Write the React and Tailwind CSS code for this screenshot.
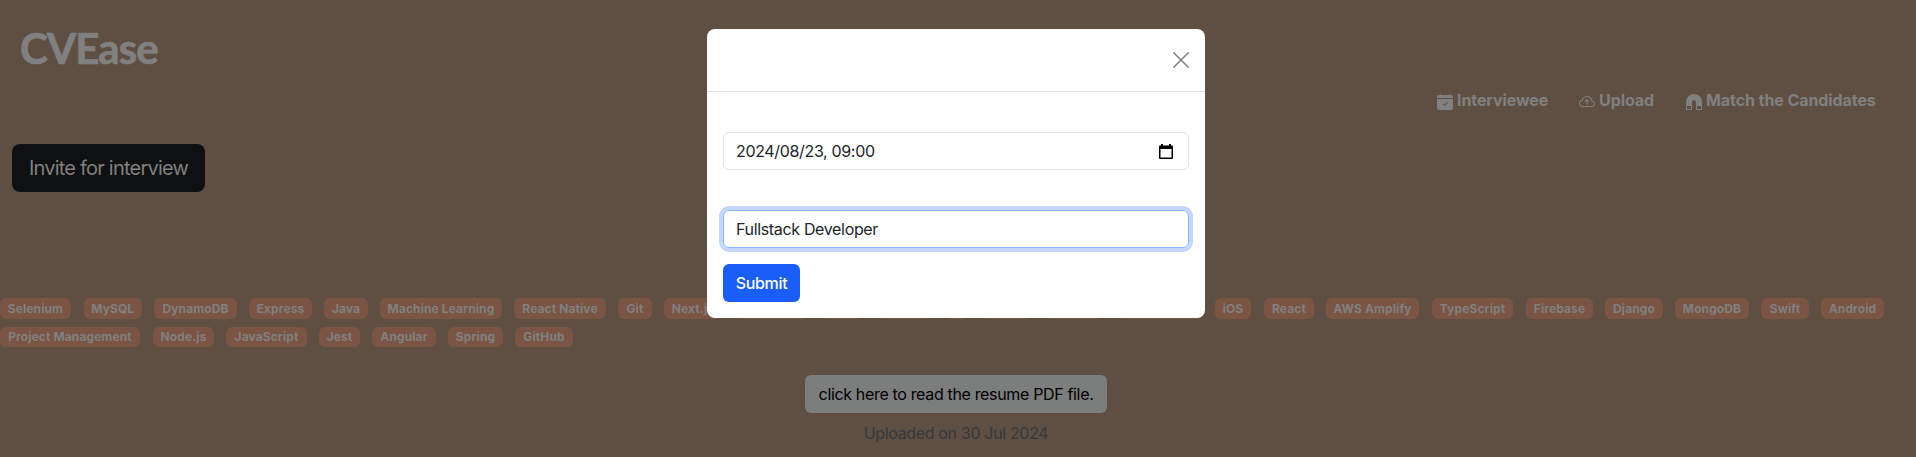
import { BsCalendarCheckFill, BsCloudArrowUp, BsMagnetFill } from "react-icons/bs";

const rowOne = [
  ["Selenium", "w-[71px] mr-[12.5px]"],
  ["MySQL", "w-[58.5px] mr-[12px]"],
  ["DynamoDB", "w-[83px] mr-[12px]"],
  ["Express", "w-[63px] mr-[12px]"],
  ["Java", "w-[44px] mr-[12px]"],
  ["Machine Learning", "w-[122px] mr-[12px]"],
  ["React Native", "w-[92px] mr-[12px]"],
  ["Git", "w-[34px] mr-[12px]"],
  ["Next.js", "w-[58px] mr-[12px]"],
  ["", "w-[75px] mr-[12px]"],
  ["", "w-[43px] mr-[12px]"],
  ["", "w-[57px] mr-[12px]"],
  ["", "w-[24px] mr-[12px]"],
  ["", "w-[51px] mr-[12px]"],
  ["", "w-[59px] mr-[12px]"],
  ["", "w-[88px] mr-[12px]"],
  ["iOS", "w-[36px] mr-[13px]"],
  ["React", "w-[50px] mr-[12px]"],
  ["AWS Amplify", "w-[93px] mr-[13px]"],
  ["TypeScript", "w-[81px] mr-[13px]"],
  ["Firebase", "w-[67px] mr-[12px]"],
  ["Django", "w-[58px] mr-[12px]"],
  ["MongoDB", "w-[74px] mr-[12px]"],
  ["Swift", "w-[48px] mr-[12px]"],
  ["Android", "w-[63px]"],
];
const rowTwo = [
  ["Project Management", "w-[140px] mr-[13px]"],
  ["Node.js", "w-[61px] mr-[12px]"],
  ["JavaScript", "w-[81px] mr-[12px]"],
  ["Jest", "w-[41px] mr-[12px]"],
  ["Angular", "w-[64px] mr-[12px]"],
  ["Spring", "w-[55px] mr-[12px]"],
  ["GitHub", "w-[58px]"],
];

function Tags({ items, className }) {
  return (
    <div className={`flex ${className}`}>
      {items.map(([name, size], i) => (
        <span key={i} className={`flex shrink-0 items-center justify-center rounded-md bg-[#7b5444] text-xs font-bold tracking-[0.1px] whitespace-nowrap text-[#808080] ${size}`}>
          {name}
        </span>
      ))}
    </div>
  );
}

export default function App() {
  return (
    <div className="relative h-[457px] w-full overflow-hidden bg-[#5f4f43] font-[Inter,sans-serif] text-base tracking-[-0.34px]">
      <header className="pt-6 pl-5">
        <h1 className="h-12 font-[Lato,sans-serif] text-[42px] leading-12 font-bold tracking-[-0.9px] text-[#808080] [-webkit-text-stroke:0.7px_#808080]">CVEase</h1>
      </header>
      <nav className="mt-4 flex h-6 items-center justify-end pr-10 font-bold tracking-[-0.08px] whitespace-nowrap text-[#808080]">
        <a className="flex w-[142px] items-center gap-1"><BsCalendarCheckFill className="mt-1 shrink-0" />Interviewee</a>
        <a className="flex w-[107px] items-center gap-1"><BsCloudArrowUp className="mt-1 shrink-0" />Upload</a>
        <a className="flex w-[190px] items-center gap-1"><BsMagnetFill className="mt-1 shrink-0" />Match the Candidates</a>
      </nav>
      <button className="mt-8 ml-3 flex h-12 w-[193px] items-center justify-center rounded-lg bg-[#0f1011] text-xl tracking-[-0.78px] text-[#808080]">
        Invite for interview
      </button>
      <Tags items={rowOne} className="mt-[106px] h-[21px]" />
      <Tags items={rowTwo} className="mt-2 h-5" />
      <div className="ml-[805px] mt-7 flex w-[302px] flex-col items-center">
        <button className="h-[38px] w-full rounded-md bg-[#7c7d7d] whitespace-nowrap text-black">click here to read the resume PDF file.</button>
        <p className="mt-2 text-[#36393c]">Uploaded on 30 Jul 2024</p>
      </div>

      <section className="absolute top-[29px] left-[707px] h-[289px] w-[498px] rounded-lg bg-white text-[#212529]">
        <div className="flex h-[63px] items-center justify-end border-b border-[#dee2e6] pr-4">
          <svg viewBox="0 0 16 16" className="size-4 fill-none stroke-[#808080]" strokeWidth="1.5" strokeLinecap="round"><path d="M.7.7l14.6 14.6M15.3.7L.7 15.3" /></svg>
        </div>
        <div className="px-4 pt-10">
          <div className="flex h-[38px] items-center justify-between rounded-md border border-[#dee2e6] pr-[15px] pl-3">
            <span>2024/08/23, 09:00</span>
            <svg viewBox="0 0 14 15" className="h-[15px] w-[14px]"><path fillRule="evenodd" d="M2 0h2v1.5h6V0h2v1.5h1q1 0 1 1V14q0 1-1 1H1q-1 0-1-1V2.500q0-1 1-1h1zM1.500 5v8.500h11V5z" /></svg>
          </div>
          <div className="mt-10 flex h-[38px] items-center rounded-md border border-[#86b7fe] px-3 ring-4 ring-[#c5d7fe]">Fullstack Developer</div>
          <button className="mt-4 h-[38px] w-[77px] rounded-md bg-[#195ef7] font-medium text-white">Submit</button>
        </div>
      </section>
    </div>
  );
}
